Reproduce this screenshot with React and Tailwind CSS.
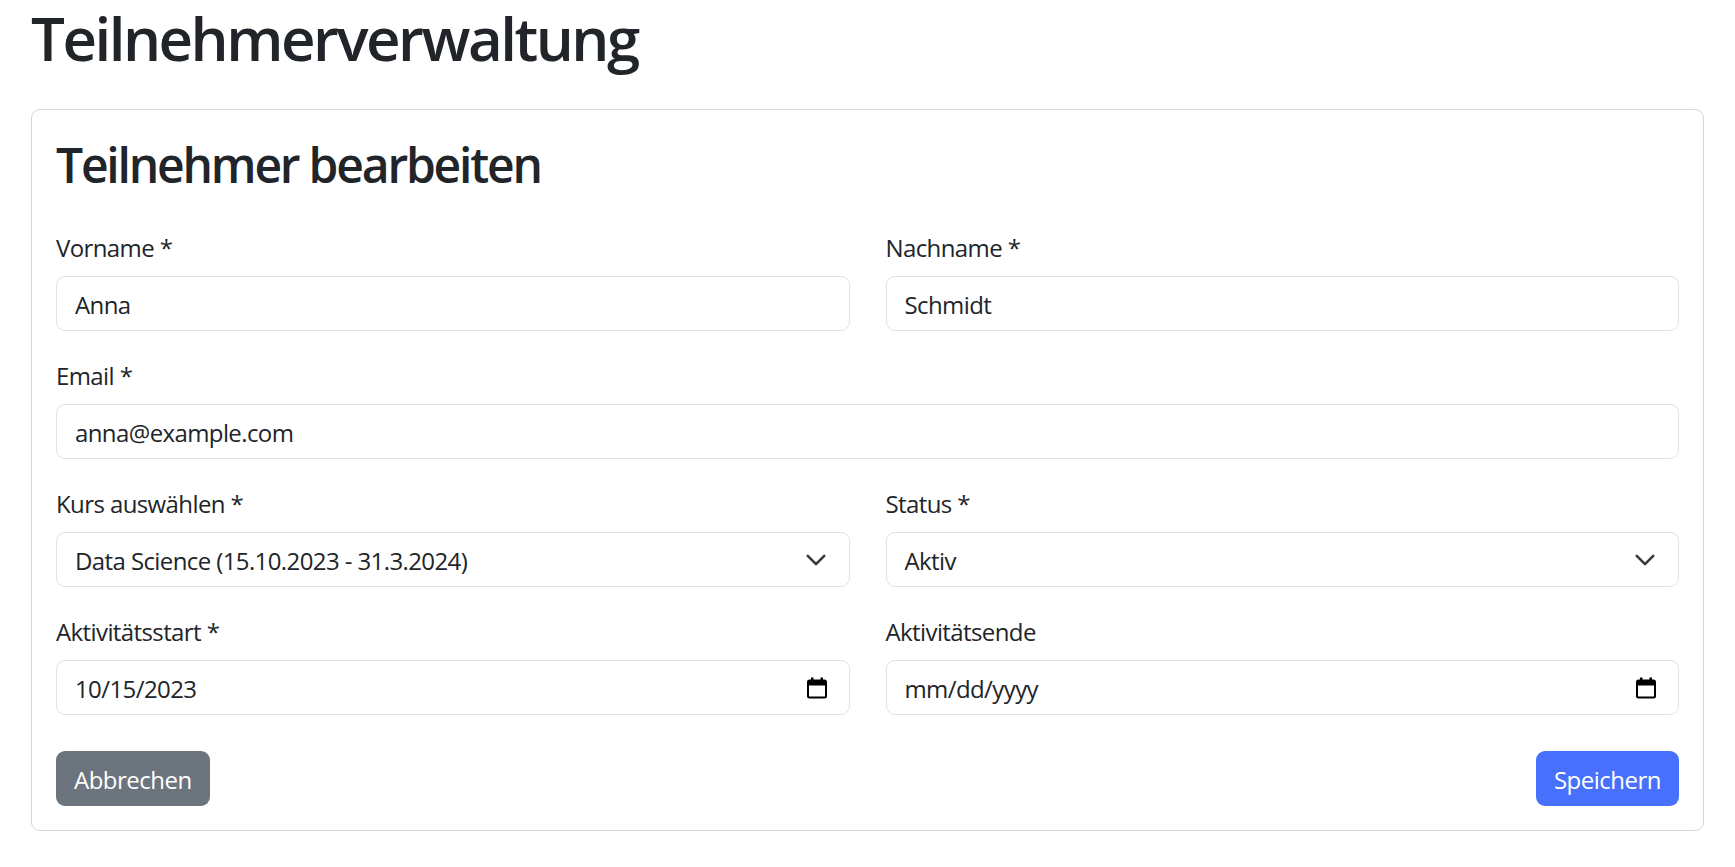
import React from 'react';

const Label = ({ children }) => (
  <label className="block h-[36px] leading-[40px] mb-3 text-[24px] tracking-[-0.6px] text-[#212529]">{children}</label>
);

const TextField = ({ label, value }) => (
  <div>
    <Label>{label}</Label>
    <input
      type="text"
      defaultValue={value}
      className="block w-full h-[55px] px-[18px] pt-[2px] text-[24px] tracking-[-0.6px] text-[#212529] bg-white border border-[#dee2e6] rounded-[9px] outline-none"
    />
  </div>
);

const Chevron = () => (
  <svg width="22" height="14" viewBox="0 0 16 10" fill="none" stroke="#343a40" strokeWidth="1.9" strokeLinecap="round" strokeLinejoin="round">
    <path d="M2 2l6 6 6-6" />
  </svg>
);

const CalendarIcon = () => (
  <svg width="20" height="22" viewBox="0 0 20 22" fill="none">
    <rect x="1" y="3.5" width="18" height="17" rx="1.5" stroke="#000" strokeWidth="2" />
    <rect x="1" y="3.5" width="18" height="5" fill="#000" />
    <rect x="4" y="0.5" width="2.5" height="4" fill="#000" />
    <rect x="13.5" y="0.5" width="2.5" height="4" fill="#000" />
  </svg>
);

const BoxField = ({ label, value, icon }) => (
  <div>
    <Label>{label}</Label>
    <div className="flex items-center justify-between h-[55px] pl-[18px] pr-[22px] text-[24px] tracking-[-0.6px] text-[#212529] bg-white border border-[#dee2e6] rounded-[9px]">
      <span className="pt-[3px]">{value}</span>
      {icon}
    </div>
  </div>
);

export default function App() {
  return (
    <div className="min-h-screen bg-white font-['Open_Sans','Noto_Sans',sans-serif] text-[#212529]">
      <div className="px-[31px] pt-[2px]">
        <h1 className="text-[60px] leading-[72px] font-semibold tracking-[-2.5px] mb-[35px]">Teilnehmerverwaltung</h1>

        <div className="border border-[#d5d5d5] rounded-[9px] p-[24px]">
          <h2 className="text-[48px] leading-[58px] pt-[2px] font-semibold tracking-[-2.2px] mb-[34px]">Teilnehmer bearbeiten</h2>

          <div className="grid grid-cols-2 gap-x-[36px] gap-y-[25px]">
            <TextField label="Vorname *" value="Anna" />
            <TextField label="Nachname *" value="Schmidt" />
            <div className="col-span-2">
              <TextField label="Email *" value="anna@example.com" />
            </div>
            <BoxField label="Kurs auswählen *" value="Data Science (15.10.2023 - 31.3.2024)" icon={<Chevron />} />
            <BoxField label="Status *" value="Aktiv" icon={<Chevron />} />
            <BoxField label="Aktivitätsstart *" value="10/15/2023" icon={<CalendarIcon />} />
            <BoxField label="Aktivitätsende" value="mm/dd/yyyy" icon={<CalendarIcon />} />
          </div>

          <div className="flex justify-between mt-[36px]">
            <button className="h-[55px] px-[18px] pt-[3px] text-[24px] tracking-[-0.5px] text-white bg-[#6c757d] rounded-[9px]">Abbrechen</button>
            <button className="h-[55px] px-[18px] pt-[3px] text-[24px] tracking-[-0.5px] text-white bg-[#4770fd] rounded-[9px]">Speichern</button>
          </div>
        </div>
      </div>
    </div>
  );
}
